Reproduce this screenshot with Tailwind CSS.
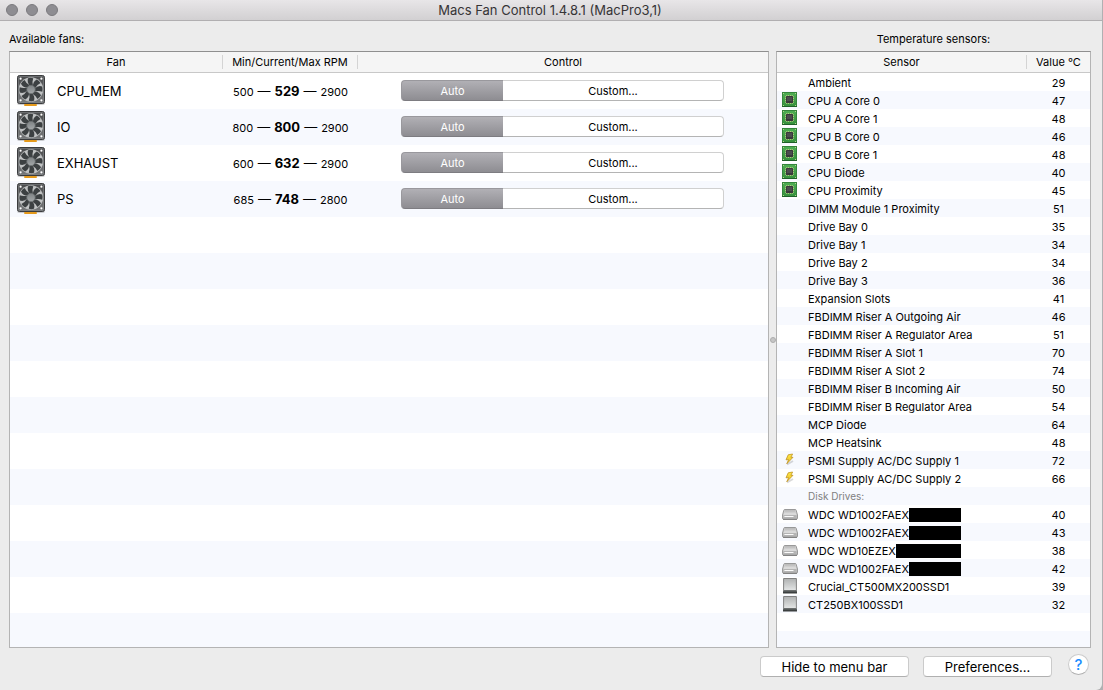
<!DOCTYPE html>
<html lang="en">
<head>
<meta charset="utf-8">
<meta name="viewport" content="width=device-width, initial-scale=1">
<title>Macs Fan Control</title>
<script src="https://cdn.jsdelivr.net/npm/@tailwindcss/browser@4"></script>
</head>
<body class="bg-[#b0b0b2] font-['Inter','Liberation_Sans',sans-serif] text-[11px] leading-[14px] text-black">
<svg class="absolute size-0" aria-hidden="true">
  <defs>
    <linearGradient id="frame" x1="0" y1="0" x2="0" y2="1"><stop offset="0" stop-color="#4a4b4d"/><stop offset="1" stop-color="#77797b"/></linearGradient>
    <linearGradient id="hub" x1="0" y1="0" x2="0" y2="1"><stop offset="0" stop-color="#7e8284"/><stop offset="1" stop-color="#a4a8aa"/></linearGradient>
    <linearGradient id="pcb" x1="0" y1="0" x2="0" y2="1"><stop offset="0" stop-color="#4fae54"/><stop offset="1" stop-color="#36913d"/></linearGradient>
    <linearGradient id="bolt" x1="0" y1="0" x2="0" y2="1"><stop offset="0" stop-color="#ffe94a"/><stop offset="1" stop-color="#e9b91c"/></linearGradient>
    <linearGradient id="metal" x1="0" y1="0" x2="0" y2="1"><stop offset="0" stop-color="#b4b4b4"/><stop offset="1" stop-color="#e6e6e6"/></linearGradient>
    <linearGradient id="ssdface" x1="0" y1="0" x2="0" y2="1"><stop offset="0" stop-color="#b0b2b2"/><stop offset="1" stop-color="#e4e6e6"/></linearGradient>
  </defs>
  <symbol id="fan" viewBox="0 0 30 32">
    <rect x="1" y="2" width="28" height="28" rx="2" fill="#000" opacity=".18"/>
    <rect x="8" y="29" width="13" height="2" rx="1" fill="#e59a1c"/>
    <rect x="1.5" y=".5" width="27" height="28" rx="2" fill="url(#frame)" stroke="#3b3c3e"/>
    <rect x="2.5" y="1.5" width="25" height="26" rx="1" fill="none" stroke="#828486" stroke-width=".6"/>
    <circle cx="15" cy="14.5" r="12.2" fill="#b9bbbc"/>
    <circle cx="15" cy="14.5" r="11.6" fill="#c0c2c3"/>
    <g fill="#3c4042">
      <path id="fanblade" d="M14.2 11 Q10.6 7.6 12 3.3 Q14.6 2.5 17.2 3.2 Q15.8 7 17 11Z"/>
      <use href="#fanblade" transform="rotate(45 15 14.5)"/>
      <use href="#fanblade" transform="rotate(90 15 14.5)"/>
      <use href="#fanblade" transform="rotate(135 15 14.5)"/>
      <use href="#fanblade" transform="rotate(180 15 14.5)"/>
      <use href="#fanblade" transform="rotate(225 15 14.5)"/>
      <use href="#fanblade" transform="rotate(270 15 14.5)"/>
      <use href="#fanblade" transform="rotate(315 15 14.5)"/>
    </g>
    <circle cx="15" cy="14.5" r="4.2" fill="url(#hub)" stroke="#6a6e70" stroke-width=".8"/>
    <g fill="#fff"><circle cx="4.6" cy="3.7" r="1.1"/><circle cx="25.4" cy="3.7" r="1.1"/><circle cx="4.6" cy="25.3" r="1.1"/><circle cx="25.4" cy="25.3" r="1.1"/></g>
  </symbol>
  <symbol id="chip" viewBox="0 0 16 16">
    <rect x=".5" y=".5" width="14" height="14" fill="url(#pcb)" stroke="#35853b"/>
    <path d="M0 14.5h15" stroke="#1f6128"/>
    <g stroke="#d8d890" stroke-width=".8">
      <path d="M4.8 3v9M6.6 3v9M8.4 3v9M10.2 3v9M3 4.8h9M3 6.6h9M3 8.4h9M3 10.2h9"/>
    </g>
    <rect x="4" y="4" width="7" height="7" rx=".5" fill="#38383a"/>
    <rect x="5" y="5" width="5" height="4" fill="#4c4c4e"/>
    <g fill="#b9d48a"><rect x="1" y="1" width="1" height="1"/><rect x="13" y="1" width="1" height="1"/><rect x="1" y="13" width="1" height="1"/><rect x="13" y="13" width="1" height="1"/></g>
  </symbol>
  <symbol id="power" viewBox="0 0 16 16">
    <path d="M5 12.5 L11 9" stroke="#000" stroke-opacity=".15" stroke-width="2"/>
    <path d="M6.2 2.8 L10.6 2 L8.9 5.3 L11 5.3 L4.8 11.8 L6.6 7.6 L4 7.8Z" fill="url(#bolt)" stroke="#b98a14" stroke-width=".7" stroke-linejoin="round"/>
  </symbol>
  <symbol id="disk" viewBox="0 0 16 16">
    <path d="M2.8 3.5 H13.2 Q14 3.5 14.2 4.3 L15.5 9 V12 Q15.5 13.2 14.2 13.2 H1.8 Q.5 13.2 .5 12 V9 L1.8 4.3 Q2 3.5 2.8 3.5Z" fill="#cfcfcf" stroke="#858585" stroke-width=".8"/>
    <path d="M3 4.2H13L14.2 8.6H1.8Z" fill="url(#metal)"/>
    <rect x="1.2" y="9" width="13.6" height="3.6" rx=".8" fill="#b4b4b4"/>
    <path d="M2.4 10.5H11.5" stroke="#fafafa" stroke-width="1"/>
    <path d="M1 13.3H15" stroke="#6e6e6e" stroke-width=".9"/>
  </symbol>
  <symbol id="ssd" viewBox="0 0 16 16">
    <path d="M1.6 .5H14.4V12.5H1.6Z" fill="url(#ssdface)" stroke="#777" stroke-width=".9"/>
    <path d="M1.5 12.6H14.5L15 13.4V15.6H1V13.4Z" fill="#3c4040"/>
    <path d="M1.4 13H14.6" stroke="#7c8080" stroke-width=".8"/>
  </symbol>
</svg>

<div class="mr-px flex min-h-screen flex-col rounded-br-md bg-[#ececec]">
  <header class="relative flex h-[21px] items-center justify-center border-b border-[#b1afb1] bg-linear-to-b from-[#e8e6e8] to-[#d2d0d2]">
    <div class="absolute left-[6px] flex gap-2">
      <button aria-label="Close" class="size-3 rounded-full border border-[#7b7a7e] bg-[#8e8d92]"></button>
      <button aria-label="Minimize" class="size-3 rounded-full border border-[#7b7a7e] bg-[#8e8d92]"></button>
      <button aria-label="Zoom" class="size-3 rounded-full border border-[#7b7a7e] bg-[#8e8d92]"></button>
    </div>
    <h1 class="pr-[2px] text-[13px] leading-4 text-[#363436]">Macs Fan Control 1.4.8.1 (MacPro3,1)</h1>
  </header>

  <main class="flex flex-1 pr-[11px] pl-[9px]">
    <section class="flex flex-1 flex-col">
      <h2 id="fans-title" class="flex h-[30px] items-center pt-[6px]">Available fans:</h2>
      <div class="flex-1 border border-[#b4b4b4] border-t-[#8f8f8f] bg-[repeating-linear-gradient(to_bottom,#fff_0,#fff_36px,#f7f9fe_36px,#f7f9fe_72px)] bg-[position:0_21px] bg-no-repeat">
        <table aria-labelledby="fans-title" class="w-full table-fixed border-separate border-spacing-0">
          <thead>
            <tr class="h-[21px] bg-[#f5f5f5]">
              <th class="w-[213px] border-b border-[#c8c8c8] p-0 font-normal"><div class="border-r border-[#d4d4d4]">Fan</div></th>
              <th class="w-[135px] border-b border-[#c8c8c8] p-0 font-normal"><div class="border-r border-[#d4d4d4]">Min/Current/Max RPM</div></th>
              <th class="border-b border-[#c8c8c8] p-0 font-normal">Control</th>
            </tr>
          </thead>
          <tbody id="fans"></tbody>
        </table>
      </div>
    </section>

    <div role="separator" class="flex w-[7px] items-center justify-center pt-[10px]">
      <span class="size-[6px] rounded-full border border-[#adadad] bg-[#c6c6c6]"></span>
    </div>

    <section class="flex w-[315px] flex-col">
      <h2 id="sensors-title" class="flex h-[30px] items-center justify-center pt-[6px]">Temperature sensors:</h2>
      <div class="flex-1 border border-[#b4b4b4] border-t-[#8f8f8f] bg-[repeating-linear-gradient(to_bottom,#fff_0,#fff_18px,#f7f9fe_18px,#f7f9fe_36px)] bg-[position:0_21px] bg-no-repeat">
        <table aria-labelledby="sensors-title" class="w-full table-fixed border-separate border-spacing-0">
          <thead>
            <tr class="h-[21px] bg-[#f5f5f5]">
              <th class="border-b border-[#c8c8c8] p-0 font-normal"><div class="border-r border-[#d4d4d4]">Sensor</div></th>
              <th class="w-[63px] border-b border-[#c8c8c8] p-0 font-normal">Value °C</th>
            </tr>
          </thead>
          <tbody id="sensors"></tbody>
        </table>
      </div>
    </section>
  </main>

  <footer class="flex h-[42px] items-start justify-end gap-[14px] pt-2 pr-[13px] text-[13px] leading-4">
    <button class="h-[21px] w-[149px] rounded border border-[#cbcbcb] border-b-[#b0b0b0] bg-white">Hide to menu bar</button>
    <button class="h-[21px] w-[129px] rounded border border-[#cbcbcb] border-b-[#b0b0b0] bg-white">Preferences...</button>
    <button aria-label="Help" class="-mt-[2px] ml-[2px] size-[21px] rounded-full border border-[#cbcbcb] border-b-[#b0b0b0] bg-white text-[15px] font-medium text-[#1a8cff]">?</button>
  </footer>
</div>

<script>
const fans = [['CPU_MEM', 500, 529, 2900], ['IO', 800, 800, 2900], ['EXHAUST', 600, 632, 2900], ['PS', 685, 748, 2800]];
document.getElementById('fans').innerHTML = fans.map(([name, min, cur, max]) => `
  <tr class="h-9">
    <td class="p-0"><div class="flex items-center gap-[11px] pl-[6px] text-[13px] leading-4"><svg class="h-8 w-[30px]" aria-hidden="true"><use href="#fan"/></svg>${name}</div></td>
    <td class="p-0"><div class="flex items-baseline justify-center leading-4"><span>${min}</span><span class="px-1 text-[13px]">—</span><b class="text-[13px]">${cur}</b><span class="px-1 text-[13px]">—</span><span>${max}</span></div></td>
    <td class="p-0 pb-px"><div role="group" aria-label="${name} control" class="mr-11 ml-[43px] flex h-[21px]">
      <button aria-pressed="true" class="w-[102px] rounded-l border border-r-0 border-[#99989d] border-b-[#7d7c81] bg-linear-to-b from-[#b1b0b5] to-[#8e8d92] text-white">Auto</button>
      <button aria-pressed="false" class="flex-1 rounded-r border border-l-0 border-[#d0d0d0] border-b-[#b4b4b4] bg-white">Custom...</button>
    </div></td>
  </tr>`).join('');

// icon, label, value, width class of the blacked-out serial number
const sensors = [
  ['', 'Ambient', 29], ['chip', 'CPU A Core 0', 47], ['chip', 'CPU A Core 1', 48], ['chip', 'CPU B Core 0', 46],
  ['chip', 'CPU B Core 1', 48], ['chip', 'CPU Diode', 40], ['chip', 'CPU Proximity', 45], ['', 'DIMM Module 1 Proximity', 51],
  ['', 'Drive Bay 0', 35], ['', 'Drive Bay 1', 34], ['', 'Drive Bay 2', 34], ['', 'Drive Bay 3', 36], ['', 'Expansion Slots', 41],
  ['', 'FBDIMM Riser A Outgoing Air', 46], ['', 'FBDIMM Riser A Regulator Area', 51], ['', 'FBDIMM Riser A Slot 1', 70],
  ['', 'FBDIMM Riser A Slot 2', 74], ['', 'FBDIMM Riser B Incoming Air', 50], ['', 'FBDIMM Riser B Regulator Area', 54],
  ['', 'MCP Diode', 64], ['', 'MCP Heatsink', 48], ['power', 'PSMI Supply AC/DC Supply 1', 72], ['power', 'PSMI Supply AC/DC Supply 2', 66],
  ['', 'Disk Drives:', ''],
  ['disk', 'WDC WD1002FAEX', 40, 'w-[52px]'], ['disk', 'WDC WD1002FAEX', 43, 'w-[52px]'],
  ['disk', 'WDC WD10EZEX', 38, 'w-[65px]'], ['disk', 'WDC WD1002FAEX', 42, 'w-[52px]'],
  ['ssd', 'Crucial_CT500MX200SSD1', 39], ['ssd', 'CT250BX100SSD1', 32]
];
document.getElementById('sensors').innerHTML = sensors.map(([icon, label, value, bar]) => `
  <tr class="h-[18px]">
    <td class="p-0"><div class="flex h-[18px] items-center pl-[5px]">
      <svg class="mr-[10px] size-4" aria-hidden="true">${icon ? `<use href="#${icon}"/>` : ''}</svg>
      <span class="${value ? 'pt-[2px]' : 'text-[10px] text-[#808080]'}">${label}</span>${bar ? `<span class="h-[14px] ${bar} mt-[2px] bg-black"></span>` : ''}
    </div></td>
    <td class="p-0"><div class="pt-[2px] text-center">${value}</div></td>
  </tr>`).join('');
</script>
</body>
</html>
